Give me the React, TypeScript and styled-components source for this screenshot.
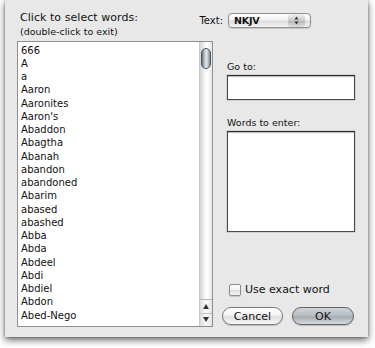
import React from "react";
import styled, { createGlobalStyle } from "styled-components";

const Global = createGlobalStyle`
  html, body { margin: 0; padding: 0; background: #ffffff; }
  body { font-family: "DejaVu Sans", "Liberation Sans", sans-serif; color: #111111; }
  * { box-sizing: border-box; }
`;

const Page = styled.div`
  width: 375px;
  height: 348px;
  padding: 0 7px 0 5px;
  background: #ffffff;
`;

const Sheet = styled.div`
  width: 363px;
  height: 337px;
  background: #e8e8e8;
  box-shadow: 0 3px 7px rgba(0, 0, 0, 0.6), 0 0 2px rgba(0, 0, 0, 0.35);
  padding: 11px 13px 10px 12px;
  display: flex;
  flex-direction: column;
`;

const Header = styled.div`
  display: flex;
  justify-content: space-between;
  align-items: flex-start;
  height: 30px;
`;

const TitleBlock = styled.div`
  padding-left: 3px;
  display: flex;
  flex-direction: column;
`;

const Title = styled.div`
  font-size: 11px;
  line-height: 14px;
  letter-spacing: 0.05px;
`;

const Hint = styled.div`
  font-size: 9.5px;
  line-height: 13px;
`;

const TextRow = styled.div`
  display: flex;
  align-items: center;
  gap: 5px;
  margin-right: 44px;
  margin-top: 2px;
`;

const SmallLabel = styled.span`
  font-size: 10px;
`;

const Popup = styled.div`
  width: 83px;
  height: 15px;
  border-radius: 4px;
  border: 1px solid #8e8e8e;
  background: linear-gradient(#ffffff, #f1f1f1 45%, #dcdcdc 55%, #f4f4f4);
  display: flex;
  align-items: center;
  box-shadow: 0 1px 1px rgba(0, 0, 0, 0.15);
  overflow: hidden;
`;

const PopupValue = styled.span`
  flex: 1;
  font-size: 9.5px;
  font-weight: bold;
  padding-left: 5px;
  letter-spacing: -0.2px;
`;

const PopupArrows = styled.span`
  width: 17px;
  height: 100%;
  display: flex;
  align-items: center;
  justify-content: center;
  margin-right: 5px;
  border-radius: 3px;
  background: linear-gradient(#f2f2f2, #c9c9c9 50%, #b5b5b5 55%, #e0e0e0);
`;

const Body = styled.div`
  flex: 1;
  display: flex;
  gap: 14px;
`;

const ListBox = styled.div`
  width: 196px;
  height: 286px;
  border: 1px solid #8f8f8f;
  background: #ffffff;
  display: flex;
`;

const Items = styled.div`
  flex: 1;
  padding: 1.5px 0 0 3px;
  overflow: hidden;
`;

const Item = styled.div`
  font-size: 10px;
  line-height: 13.25px;
  height: 13.25px;
  white-space: nowrap;
`;

const Scroll = styled.div`
  width: 13px;
  display: flex;
  flex-direction: column;
  border-left: 1px solid #c8c8c8;
  background: linear-gradient(90deg, #d4d4d4, #f6f6f6 40%, #ffffff 60%, #e6e6e6);
`;

const Track = styled.div`
  flex: 1;
  padding: 6px 1px 0 1px;
`;

const Thumb = styled.div`
  width: 10px;
  height: 21px;
  border-radius: 5px;
  border: 1px solid #4c5660;
  background: linear-gradient(90deg, #66707a, #c4cbd3 35%, #e3e8ee 55%, #848d97);
`;

const ArrowBtn = styled.div<{ $top?: boolean }>`
  height: 13.5px;
  display: flex;
  align-items: center;
  justify-content: center;
  border-top: 1px solid ${(p) => (p.$top ? "#b3b3b3" : "#c6c6c6")};
  background: linear-gradient(90deg, #dcdcdc, #fafafa 50%, #e4e4e4);
`;

const Right = styled.div`
  width: 128px;
  display: flex;
  flex-direction: column;
`;

const FieldLabel = styled.div<{ $mt: number }>`
  font-size: 9.5px;
  line-height: 12px;
  margin-top: ${(p) => p.$mt}px;
  margin-bottom: 2px;
`;

const Field = styled.div<{ $h: number }>`
  width: 128px;
  height: ${(p) => p.$h}px;
  background: #ffffff;
  border: 1px solid #4a4a4a;
  border-top-color: #2e2e2e;
  box-shadow: inset 0 1px 1px rgba(0, 0, 0, 0.3), 0 0 0 0.5px #b8b8b8;
`;

const CheckRow = styled.label`
  display: flex;
  align-items: center;
  gap: 4px;
  margin-top: auto;
  padding-left: 2px;
  font-size: 11px;
`;

const Check = styled.span`
  width: 12px;
  height: 12px;
  border-radius: 2px;
  border: 1px solid #8c8c8c;
  background: linear-gradient(#ffffff, #f0f0f0 50%, #dedede 55%, #f6f6f6);
  box-shadow: 0 1px 1px rgba(0, 0, 0, 0.15);
`;

const Buttons = styled.div`
  display: flex;
  gap: 9px;
  margin-top: 11px;
  margin-left: -5px;
  margin-bottom: 2px;
`;

const Button = styled.div<{ $default?: boolean }>`
  width: ${(p) => (p.$default ? 62 : 61)}px;
  height: 18px;
  border-radius: 9px;
  border: 1px solid ${(p) => (p.$default ? "#5f6468" : "#7b7b7b")};
  background: ${(p) =>
    p.$default
      ? "linear-gradient(#cfd3d7, #b9bec3 45%, #a7adb3 55%, #d6dade)"
      : "linear-gradient(#ffffff, #f3f3f3 45%, #e0e0e0 55%, #f7f7f7)"};
  box-shadow: 0 1px 1px rgba(0, 0, 0, 0.2);
  display: flex;
  align-items: center;
  justify-content: center;
  font-size: 11px;
  color: #111;
`;

const words = [
  "666",
  "A",
  "a",
  "Aaron",
  "Aaronites",
  "Aaron's",
  "Abaddon",
  "Abagtha",
  "Abanah",
  "abandon",
  "abandoned",
  "Abarim",
  "abased",
  "abashed",
  "Abba",
  "Abda",
  "Abdeel",
  "Abdi",
  "Abdiel",
  "Abdon",
  "Abed-Nego",
];

export default function App() {
  return (
    <>
      <Global />
      <Page>
        <Sheet>
          <Header>
            <TitleBlock>
              <Title>Click to select words:</Title>
              <Hint>(double-click to exit)</Hint>
            </TitleBlock>
            <TextRow>
              <SmallLabel>Text:</SmallLabel>
              <Popup>
                <PopupValue>NKJV</PopupValue>
                <PopupArrows>
                  <svg width="5" height="9" viewBox="0 0 5 9">
                    <path d="M2.5 0.5 L4.5 3.5 L0.5 3.5 Z" fill="#333" />
                    <path d="M2.5 8.5 L4.5 5.5 L0.5 5.5 Z" fill="#333" />
                  </svg>
                </PopupArrows>
              </Popup>
            </TextRow>
          </Header>
          <Body>
            <ListBox>
              <Items>
                {words.map((w) => (
                  <Item key={w}>{w}</Item>
                ))}
              </Items>
              <Scroll>
                <Track>
                  <Thumb />
                </Track>
                <ArrowBtn $top>
                  <svg width="6" height="5" viewBox="0 0 6 5">
                    <path d="M3 0 L6 5 L0 5 Z" fill="#333" />
                  </svg>
                </ArrowBtn>
                <ArrowBtn>
                  <svg width="6" height="5" viewBox="0 0 6 5">
                    <path d="M0 0 L6 0 L3 5 Z" fill="#333" />
                  </svg>
                </ArrowBtn>
              </Scroll>
            </ListBox>
            <Right>
              <FieldLabel $mt={20}>Go to:</FieldLabel>
              <Field $h={25} />
              <FieldLabel $mt={17}>Words to enter:</FieldLabel>
              <Field $h={101} />
              <CheckRow>
                <Check />
                <span>Use exact word</span>
              </CheckRow>
              <Buttons>
                <Button>Cancel</Button>
                <Button $default>OK</Button>
              </Buttons>
            </Right>
          </Body>
        </Sheet>
      </Page>
    </>
  );
}
